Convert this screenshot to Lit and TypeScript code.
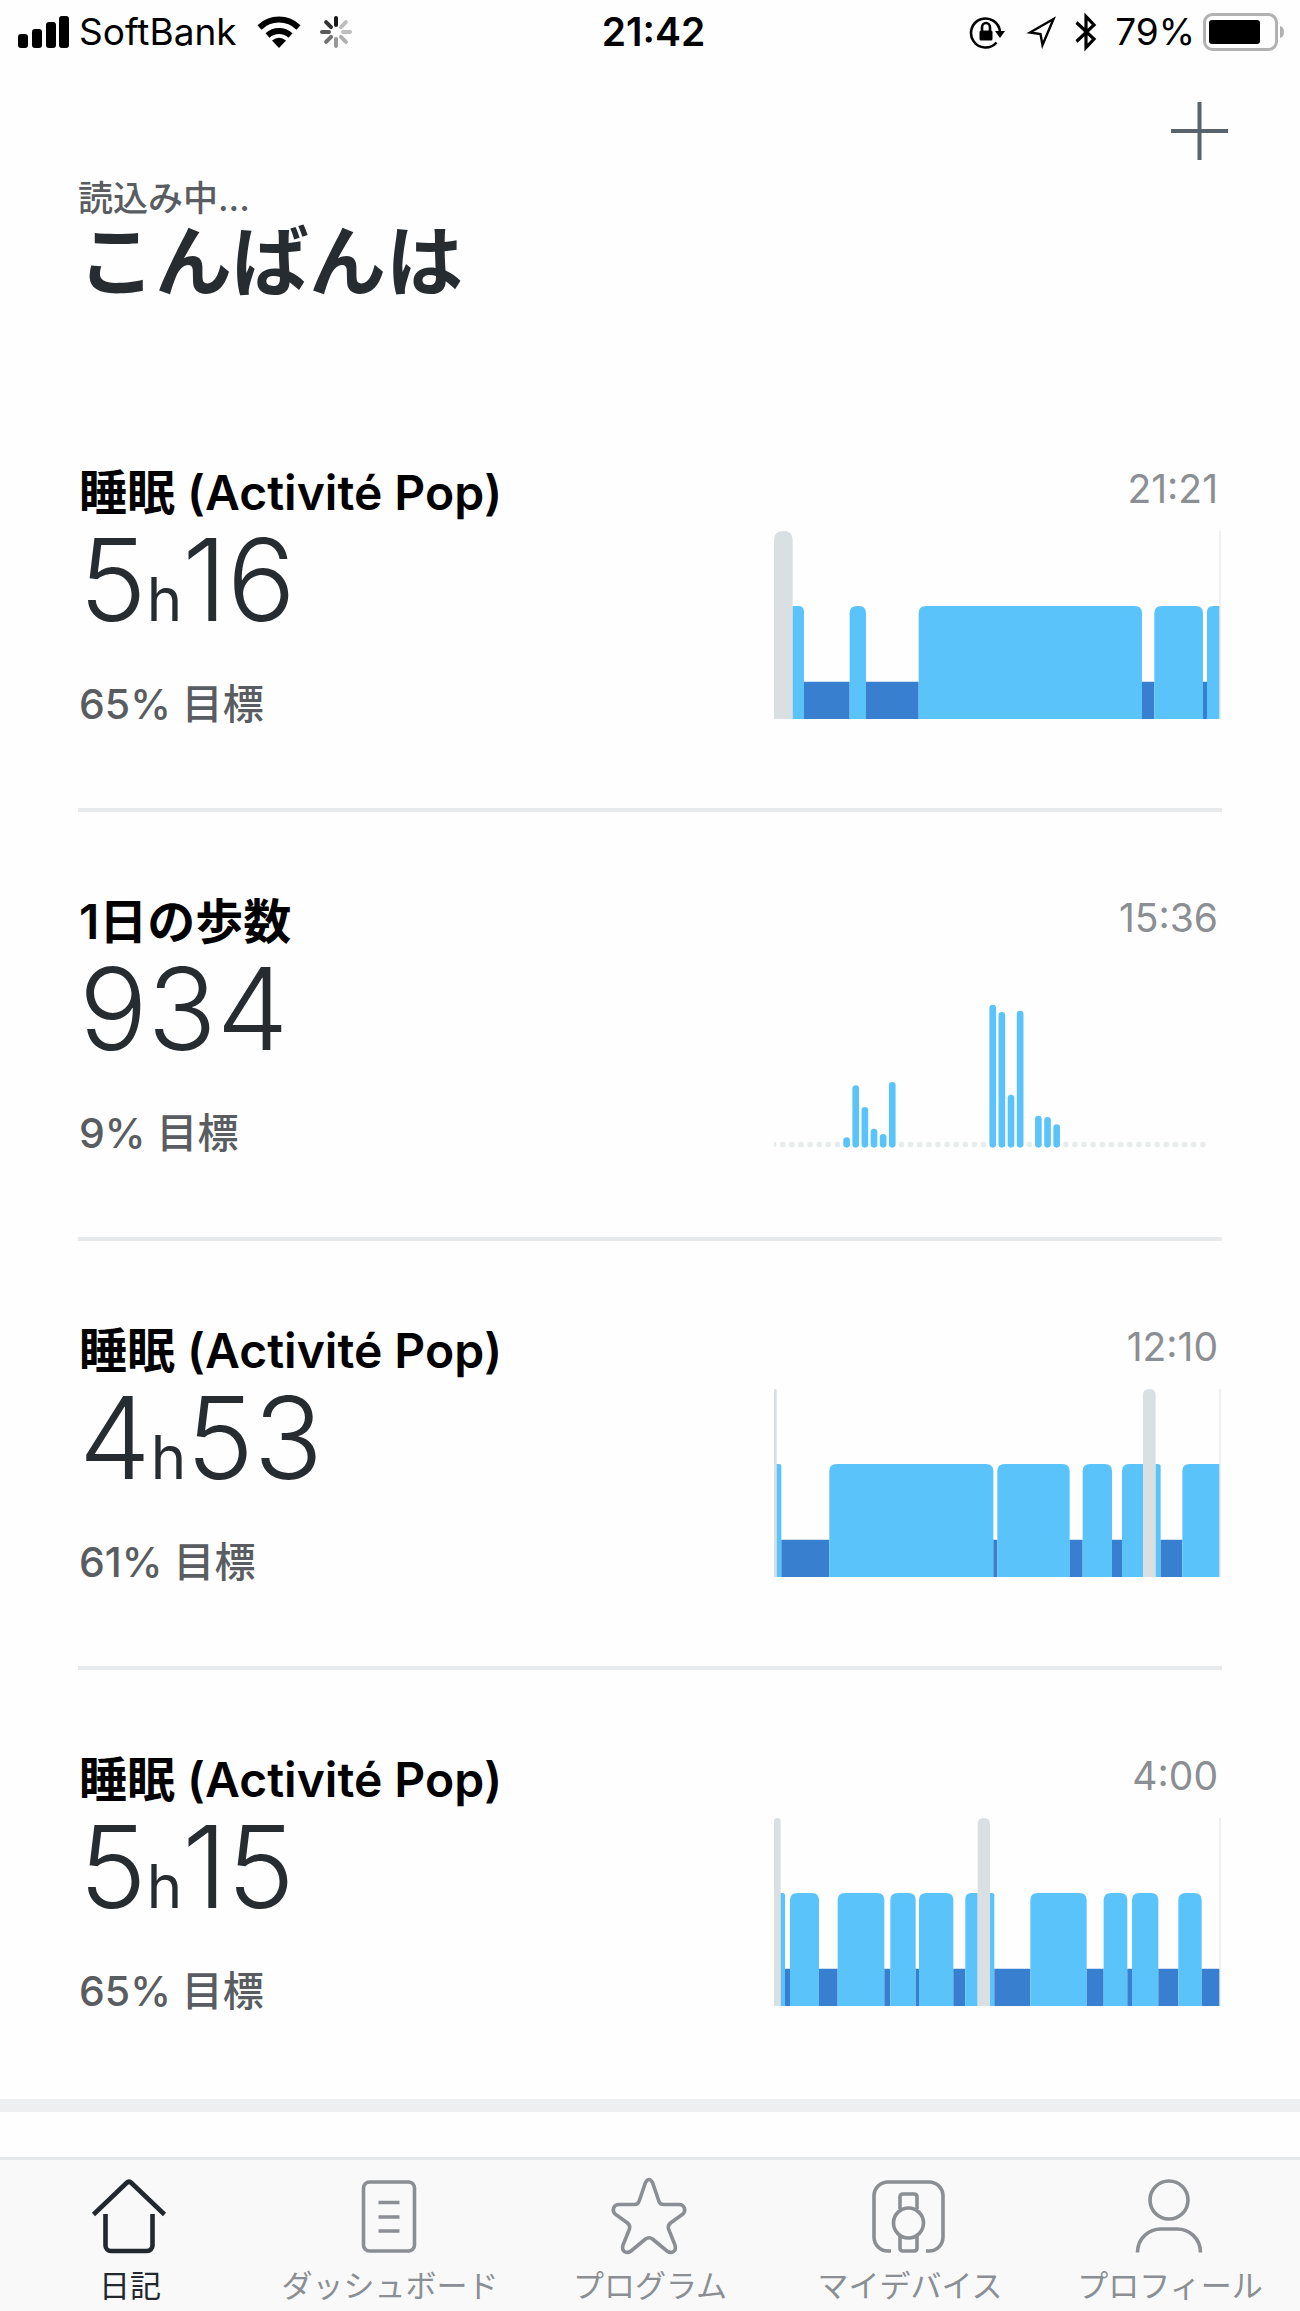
import { LitElement, html, svg, css } from "lit";
import { customElement, property, state } from "lit/decorators.js";
import { classMap } from "lit/directives/class-map.js";

type Phase = "awake" | "light" | "deep";
type Segment = [start: number, end: number, phase: Phase];

interface Entry {
  title: string;
  time: string;
  value: string[];
  goal: string;
  kind: "sleep" | "steps";
  segments?: Segment[];
  steps?: Record<number, number>;
}

const FONT = css`Inter, "Noto Sans CJK JP", sans-serif`;

const ENTRIES: Entry[] = [
  {
    title: "睡眠 (Activité Pop)",
    time: "21:21",
    value: ["5", "16"],
    goal: "65% 目標",
    kind: "sleep",
    segments: [
      [0, 56, "awake"], [56, 90, "light"], [90, 227, "deep"], [227, 276, "light"],
      [276, 434, "deep"], [434, 1104, "light"], [1104, 1141, "deep"],
      [1141, 1287, "light"], [1287, 1299, "deep"], [1299, 1336, "light"],
    ],
  },
  {
    title: "1日の歩数",
    time: "15:36",
    value: ["934"],
    goal: "9% 目標",
    kind: "steps",
    steps: {
      8: 31, 9: 187, 10: 122, 11: 57, 12: 41, 13: 197,
      24: 429, 25: 407, 26: 159, 27: 411, 29: 96, 30: 92, 31: 70,
    },
  },
  {
    title: "睡眠 (Activité Pop)",
    time: "12:10",
    value: ["4", "53"],
    goal: "61% 目標",
    kind: "sleep",
    segments: [
      [0, 8, "awake"], [8, 22, "light"], [22, 166, "deep"], [166, 658, "light"],
      [658, 670, "deep"], [670, 887, "light"], [887, 926, "deep"], [926, 1014, "light"],
      [1014, 1044, "deep"], [1044, 1107, "light"], [1107, 1145, "awake"],
      [1145, 1160, "light"], [1160, 1225, "deep"], [1225, 1336, "light"],
    ],
  },
  {
    title: "睡眠 (Activité Pop)",
    time: "4:00",
    value: ["5", "15"],
    goal: "65% 目標",
    kind: "sleep",
    segments: [
      [0, 20, "awake"], [20, 33, "light"], [33, 48, "deep"], [48, 135, "light"],
      [135, 191, "deep"], [191, 331, "light"], [331, 349, "deep"], [349, 425, "light"],
      [425, 435, "deep"], [435, 538, "light"], [538, 574, "deep"], [574, 611, "light"],
      [611, 648, "awake"], [648, 661, "light"], [661, 769, "deep"], [769, 938, "light"],
      [938, 989, "deep"], [989, 1060, "light"], [1060, 1074, "deep"],
      [1074, 1153, "light"], [1153, 1213, "deep"], [1213, 1283, "light"],
      [1283, 1336, "deep"],
    ],
  },
];

@customElement("sleep-chart")
class SleepChart extends LitElement {
  @property({ attribute: false }) segments: Segment[] = [];

  static styles = css`
    :host { display: block; }
    .plot { display: block; width: 447px; height: 188px; }
    .awake { fill: #dadfe2; }
    .light { fill: #5ac4fa; }
    .deep { fill: #387fcf; }
    .edge { fill: #eff0f2; }
  `;

  /* Light phases are rounded on each side that drops down to a deep phase. */
  private bar([x0, x1, phase]: Segment, i: number) {
    const bottom = 564;
    const top = phase === "awake" ? 0 : phase === "light" ? 225 : 452;
    const radius = (other?: Segment) => {
      if (phase === "deep") return 0;
      if (phase === "awake") return Math.min(28, (x1 - x0) / 2);
      if (!other || other[2] !== "deep") return 0;
      return Math.min(22, (x1 - x0) / 2);
    };
    const l = radius(this.segments[i - 1]);
    const r = radius(this.segments[i + 1]);
    const d = `M${x0} ${bottom}V${top + l}Q${x0} ${top} ${x0 + l} ${top}H${x1 - r}Q${x1} ${top} ${x1} ${top + r}V${bottom}Z`;
    return svg`<path class=${phase} d=${d}></path>`;
  }

  render() {
    return html`
      <svg class="plot" viewBox="0 0 1341 564" aria-hidden="true">
        <rect class="edge" x="1335" y="0" width="6" height="564"></rect>
        ${this.segments.map((s, i) => this.bar(s, i))}
      </svg>
    `;
  }
}

@customElement("steps-chart")
class StepsChart extends LitElement {
  @property({ attribute: false }) steps: Record<number, number> = {};

  static styles = css`
    :host { display: block; }
    .plot { display: block; width: 447px; height: 188px; }
    .bar { fill: #5ac4fa; }
    .dot { fill: #e9ecec; }
  `;

  render() {
    const slots = Array.from({ length: 48 }, (_, k) => k);
    return html`
      <svg class="plot" viewBox="0 0 1341 564" aria-hidden="true">
        ${slots.map((k) => {
          const cx = 27.4 * k - 1.4;
          const h = this.steps[k];
          return h
            ? svg`<rect class="bar" x=${cx - 10} y=${563 - h} width="20" height=${h} rx="10"></rect>`
            : svg`<rect class="dot" x=${cx - 8} y="545" width="16" height="17" rx="6"></rect>`;
        })}
      </svg>
    `;
  }
}

@customElement("diary-entry")
class DiaryEntry extends LitElement {
  @property({ attribute: false }) entry!: Entry;

  static styles = css`
    :host { display: block; font-family: ${FONT}; }
    .card { display: flex; justify-content: space-between; padding: 76px 1px 74px; }
    .info { display: flex; flex-direction: column; }
    .title { margin: 0; font-size: 48px; line-height: 68px; font-weight: 600; color: #000; }
    .value {
      display: flex; align-items: baseline; height: 106px; margin: 0;
      font-size: 114px; line-height: 106px; font-weight: 300; color: #272c31;
    }
    .unit { font-size: 60px; line-height: 60px; font-weight: 400; }
    .goal { margin: 41px 0 0; font-size: 41px; line-height: 60px; font-weight: 500; color: #595c60; }
    .side { display: flex; flex-direction: column; align-items: flex-end; gap: 12px; }
    .time { padding-right: 3px; font-size: 39px; line-height: 60px; color: #8b8e92; }
  `;

  render() {
    const e = this.entry;
    const [first, second] = e.value;
    return html`
      <article class="card">
        <div class="info">
          <h2 class="title">${e.title}</h2>
          <p class="value"><span>${first}</span>${second ? html`<span class="unit">h</span><span>${second}</span>` : ""}</p>
          <p class="goal">${e.goal}</p>
        </div>
        <div class="side">
          <time class="time">${e.time}</time>
          ${e.kind === "sleep"
            ? html`<sleep-chart .segments=${e.segments ?? []}></sleep-chart>`
            : html`<steps-chart .steps=${e.steps ?? {}}></steps-chart>`}
        </div>
      </article>
    `;
  }
}

@customElement("status-bar")
class StatusBar extends LitElement {
  static styles = css`
    :host { display: block; font-family: ${FONT}; color: #000; }
    .bar {
      display: grid; grid-template-columns: 1fr auto 1fr; align-items: center;
      height: 64px; padding: 0 15px 0 18px; font-size: 37px; line-height: 44px;
    }
    .group { display: flex; align-items: center; }
    .end { justify-content: flex-end; }
    .clock { padding-left: 4px; font-size: 39px; font-weight: 600; }
    .signal { margin-right: 9px; }
    .wifi { margin: 0 18px 0 20px; }
    .lock { margin-right: 20px; }
    .arrow { margin-right: 18px; }
    .tooth { margin-right: 18px; }
    .battery { margin-left: 8px; }
    svg { display: block; }
  `;

  render() {
    const rays = [0.9, 0.25, 0.25, 0.3, 0.4, 0.55, 0.65, 0.8];
    return html`
      <div class="bar">
        <div class="group">
          <svg class="signal" width="52" height="34" aria-hidden="true">
            <rect x="0" y="19" width="10" height="14" rx="3"></rect>
            <rect x="14" y="14" width="10" height="19" rx="3"></rect>
            <rect x="28" y="7" width="10" height="26" rx="3"></rect>
            <rect x="41" y="1" width="10" height="32" rx="3"></rect>
          </svg>
          <span>SoftBank</span>
          <svg class="wifi" width="44" height="34" viewBox="0 0 44 34" fill="none" stroke="#000" stroke-width="6" aria-hidden="true">
            <path d="M2.500 12.500a28 28 0 0 1 39 0"></path>
            <path d="M10.500 20.500a17 17 0 0 1 23 0"></path>
            <path d="M15 25.500q7-5.500 14 0L22 33z" fill="#000" stroke="none"></path>
          </svg>
          <svg width="34" height="34" viewBox="-17 -17 34 34" aria-hidden="true">
            ${rays.map((o, i) => svg`<line y1="-7" y2="-14" stroke="#000" stroke-width="4" stroke-linecap="round" opacity=${o} transform="rotate(${i * 45})"></line>`)}
          </svg>
        </div>
        <time class="clock">21:42</time>
        <div class="group end">
          <svg class="lock" width="36" height="36" viewBox="0 0 36 36" fill="none" stroke="#000" stroke-width="2.600" aria-hidden="true">
            <path d="M27.500 28.500A14.500 14.500 0 1 1 31 18"></path>
            <path d="M26 17h10l-5 7z" fill="#000" stroke="none"></path>
            <rect x="10.500" y="16.500" width="13" height="10" rx="1.500" fill="#000" stroke="none"></rect>
            <path d="M13 17v-3.500a4 4.500 0 0 1 8 0V17"></path>
          </svg>
          <svg class="arrow" width="32" height="34" viewBox="0 0 32 34" fill="none" stroke="#000" stroke-width="2.400" aria-hidden="true">
            <path d="M28.500 4L5 17.500l10.500 1.500 2 11z"></path>
          </svg>
          <svg class="tooth" width="22" height="40" viewBox="0 0 22 40" fill="none" stroke="#000" stroke-width="3.200" aria-hidden="true">
            <path d="M1.500 10.500L19 27l-8 8.500V4.500L19 13 1.500 29.500"></path>
          </svg>
          <span>79%</span>
          <svg class="battery" width="82" height="38" viewBox="0 0 82 38" aria-hidden="true">
            <rect x="1.500" y="1.500" width="72" height="35" rx="8" fill="none" stroke="#b2b2b2" stroke-width="3"></rect>
            <rect x="6" y="7" width="51" height="24" rx="3"></rect>
            <path d="M77 13q4 1 4 6t-4 6z" fill="#b2b2b2"></path>
          </svg>
        </div>
      </div>
    `;
  }
}

interface Tab {
  id: string;
  label: string;
  icon: ReturnType<typeof svg>;
}

const TABS: Tab[] = [
  {
    id: "diary",
    label: "日記",
    icon: svg`<path d="M3.500 38.500L36.500 7q2.500-2.500 5 0l33 31.500M15.500 38v31.500a5.500 5.500 0 0 0 5.500 5.500h36a5.500 5.500 0 0 0 5.500-5.500V38" stroke-width="4.600"></path>`,
  },
  {
    id: "dashboard",
    label: "ダッシュボード",
    icon: svg`<rect x="13.500" y="6" width="51" height="69" rx="6"></rect><path d="M28.500 26.500h21M28.500 41h21M28.500 55h21"></path>`,
  },
  {
    id: "program",
    label: "プログラム",
    icon: svg`<path d="M35.500 6.500q3.500-6 7 0L49 25.500q1 3 4.500 3H69c6 0 7 6 4 9.500L60.500 47q-3 2.500-2 6l6.500 16c2 7-4 9-8 6L42.500 63q-3.500-2.500-7 0L21 75c-4 3-10 1-8-6l6.500-16q1-3.500-2-6L5 38c-3-3.500-2-9.500 4-9.500h15.500q3.500 0 4.500-3z"></path>`,
  },
  {
    id: "devices",
    label: "マイデバイス",
    icon: svg`<path d="M21 75h-3A14 14 0 0 1 4 61V20A14 14 0 0 1 18 6h41a14 14 0 0 1 14 14v41a14 14 0 0 1-14 14h-3"></path><path d="M30 33V21q0-3 3-3h11q3 0 3 3v12M30 60v12q0 3 3 3h11q3 0 3-3V60"></path><circle cx="38.500" cy="47" r="15"></circle>`,
  },
  {
    id: "profile",
    label: "プロフィール",
    icon: svg`<circle cx="39" cy="24" r="19"></circle><path d="M7.500 76.500C7.500 62 19 53 31 53h16c12 0 23.500 9 23.500 23.500"></path>`,
  },
];

@customElement("tab-bar")
class TabBar extends LitElement {
  @state() private active = "diary";

  static styles = css`
    :host { display: block; font-family: ${FONT}; }
    .tabs {
      display: grid; grid-template-columns: repeat(5, 1fr);
      background: #f9f9f9; border-top: 3px solid #e5e8e8;
    }
    .tab {
      display: flex; flex-direction: column; align-items: center; gap: 6px;
      margin: 0; padding: 16px 0 1px; border: 0; background: none; cursor: pointer;
      font: inherit; font-size: 31px; line-height: 48px; color: #8b8f93;
    }
    .active { color: #22282d; }
    .icon { display: block; width: 80px; height: 80px; }
  `;

  render() {
    return html`
      <nav class="tabs">
        ${TABS.map((t) => html`
          <button
            class=${classMap({ tab: true, active: t.id === this.active })}
            type="button"
            @click=${() => { this.active = t.id; }}
          >
            <svg class="icon" viewBox="0 0 80 80" fill="none" stroke="currentColor" stroke-width="3.600" aria-hidden="true">${t.icon}</svg>
            <span>${t.label}</span>
          </button>
        `)}
      </nav>
    `;
  }
}

@customElement("app-root")
class AppRoot extends LitElement {
  static styles = css`
    :host {
      display: flex; flex-direction: column; min-height: 100vh;
      background: #fefefe; font-family: ${FONT};
    }
    .header { display: flex; flex-direction: column; padding: 34px 69px 0 78px; }
    .add {
      align-self: flex-end; display: block; margin: 0; padding: 0; border: 0;
      background: none; cursor: pointer;
    }
    .plus { display: block; width: 64px; height: 66px; }
    .loading { margin: 10px 0 0; font-size: 35px; line-height: 48px; font-weight: 500; color: #595c60; }
    .greeting { margin: 0; font-size: 77px; line-height: 80px; font-weight: 700; color: #272c31; }
    .list { list-style: none; margin: 81px 0 0; padding: 0 78px 4px; }
    .item + .item { border-top: 4px solid #e7e9eb; }
    .band { height: 13px; background: #edeff0; }
    .spacer { flex: 1; }
  `;

  render() {
    return html`
      <status-bar></status-bar>
      <header class="header">
        <button class="add" type="button" aria-label="追加">
          <svg class="plus" viewBox="0 0 64 66" stroke="#59636b" stroke-width="4" aria-hidden="true">
            <path d="M4 33h57M32.500 4v58"></path>
          </svg>
        </button>
        <p class="loading">読込み中...</p>
        <h1 class="greeting">こんばんは</h1>
      </header>
      <ul class="list">
        ${ENTRIES.map((e) => html`<li class="item"><diary-entry .entry=${e}></diary-entry></li>`)}
      </ul>
      <div class="band"></div>
      <div class="spacer"></div>
      <tab-bar></tab-bar>
    `;
  }
}
